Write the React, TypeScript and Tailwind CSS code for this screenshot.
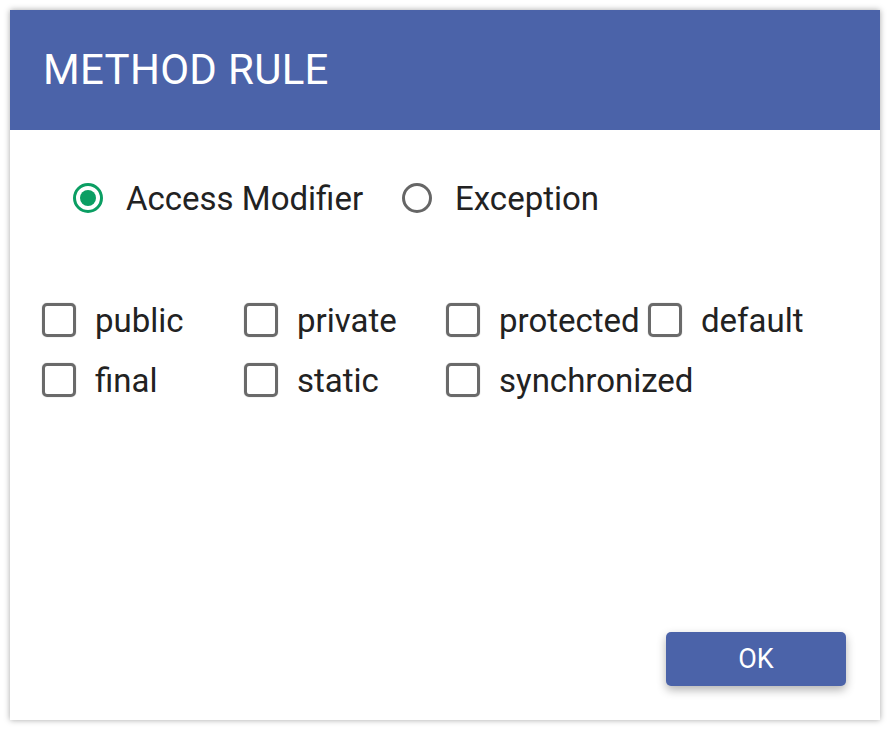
import React from "react";

const font = { fontFamily: "Roboto, 'Liberation Sans', sans-serif" };

function Radio({ checked, label }: { checked?: boolean; label: string }) {
  return (
    <div className="flex items-center h-[40px]">
      <div
        className={
          checked
            ? "w-[30px] h-[30px] shrink-0 rounded-full border-[3px] border-[#0b9e63] flex items-center justify-center"
            : "w-[30px] h-[30px] shrink-0 rounded-full border-[3px] border-[#666666] flex items-center justify-center"
        }
      >
        {checked && <div className="w-[16px] h-[16px] rounded-full bg-[#0b9e63]" />}
      </div>
      <span className="ml-[23px] text-[33px] text-[#222222] leading-none">{label}</span>
    </div>
  );
}

function Check({ label }: { label: string }) {
  return (
    <div className="w-[202px] shrink-0 flex items-center h-[40px] whitespace-nowrap">
      <div className="w-[34px] h-[34px] shrink-0 rounded-[5px] border-[3.5px] border-[#6a6a6a] shadow-[0_0_1px_rgba(0,0,0,0.4)]" />
      <span className="ml-[19px] text-[33px] text-[#222222] leading-none">{label}</span>
    </div>
  );
}

export default function App() {
  return (
    <div className="w-[890px] h-[730px] bg-white p-[10px]" style={font}>
      <div className="w-[870px] h-[710px] bg-white flex flex-col shadow-[0_0_6px_rgba(0,0,0,0.35)]">
        <div className="h-[120px] bg-[#4b63a9] flex items-center pl-[33px] shrink-0">
          <span className="text-white text-[42px] leading-none tracking-[0.3px]">METHOD RULE</span>
        </div>
        <div className="flex-1 flex flex-col">
          <div className="flex items-center mt-[48px] pl-[63px]">
            <Radio checked label="Access Modifier" />
            <div className="ml-[39px]">
              <Radio label="Exception" />
            </div>
          </div>
          <div className="flex flex-col mt-[82px] pl-[32px] gap-[20px]">
            <div className="flex">
              <Check label="public" />
              <Check label="private" />
              <Check label="protected" />
              <Check label="default" />
            </div>
            <div className="flex">
              <Check label="final" />
              <Check label="static" />
              <Check label="synchronized" />
            </div>
          </div>
          <div className="mt-auto self-end mr-[34px] mb-[34px]">
            <button className="w-[180px] h-[54px] rounded-[5px] bg-[#4b63a9] text-white text-[27px] leading-none shadow-[0_4px_10px_rgba(0,0,0,0.3)]">
              OK
            </button>
          </div>
        </div>
      </div>
    </div>
  );
}
